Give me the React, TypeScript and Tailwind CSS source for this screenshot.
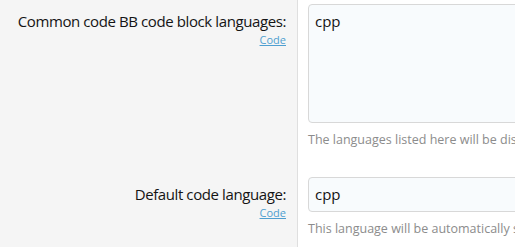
export default function App() {
  const font = { fontFamily: '"Open Sans", "Noto Sans", sans-serif' };
  return (
    <div className="w-[515px] h-[247px] overflow-hidden bg-white" style={font}>
      <div className="flex">
        <div className="w-[298px] shrink-0 bg-[#f5f5f5] border-r border-[#dfdfdf] pr-[11px] pt-[11px] text-right">
          <div className="text-[15px] leading-[20px] text-[#141414] tracking-[-0.4px]">Common code BB code block languages:</div>
          <div className="text-[11px] leading-[16px] mt-[1px]">
            <a className="text-[#4f9fd0] underline">Code</a>
          </div>
        </div>
        <div className="flex-1 pl-[10px] pt-[4px] pb-[10px] min-w-0">
          <div className="w-[260px] h-[119px] bg-[#f8fbfd] border border-[#d8d8d8] rounded-[4px] px-[6px] py-[6px] text-[15px] leading-[20px] text-[#141414]">cpp</div>
          <div className="mt-[8px] text-[12.5px] leading-[18px] text-[#8c8c8c] whitespace-nowrap">The languages listed here will be displayed</div>
        </div>
      </div>
      <div className="flex">
        <div className="w-[298px] shrink-0 bg-[#f5f5f5] border-r border-[#dfdfdf] pr-[11px] pt-[25px] h-[112px] text-right">
          <div className="text-[15px] leading-[20px] text-[#141414] tracking-[-0.4px]">Default code language:</div>
          <div className="text-[11px] leading-[16px] mt-[1px]">
            <a className="text-[#4f9fd0] underline">Code</a>
          </div>
        </div>
        <div className="flex-1 pl-[10px] pt-[18px] min-w-0">
          <div className="w-[260px] h-[35px] bg-[#f8fbfd] border border-[#d8d8d8] rounded-[4px] px-[6px] flex items-center text-[15px] text-[#141414]">cpp</div>
          <div className="mt-[8px] text-[12.5px] leading-[18px] text-[#8c8c8c] whitespace-nowrap">This language will be automatically selected</div>
        </div>
      </div>
    </div>
  );
}
